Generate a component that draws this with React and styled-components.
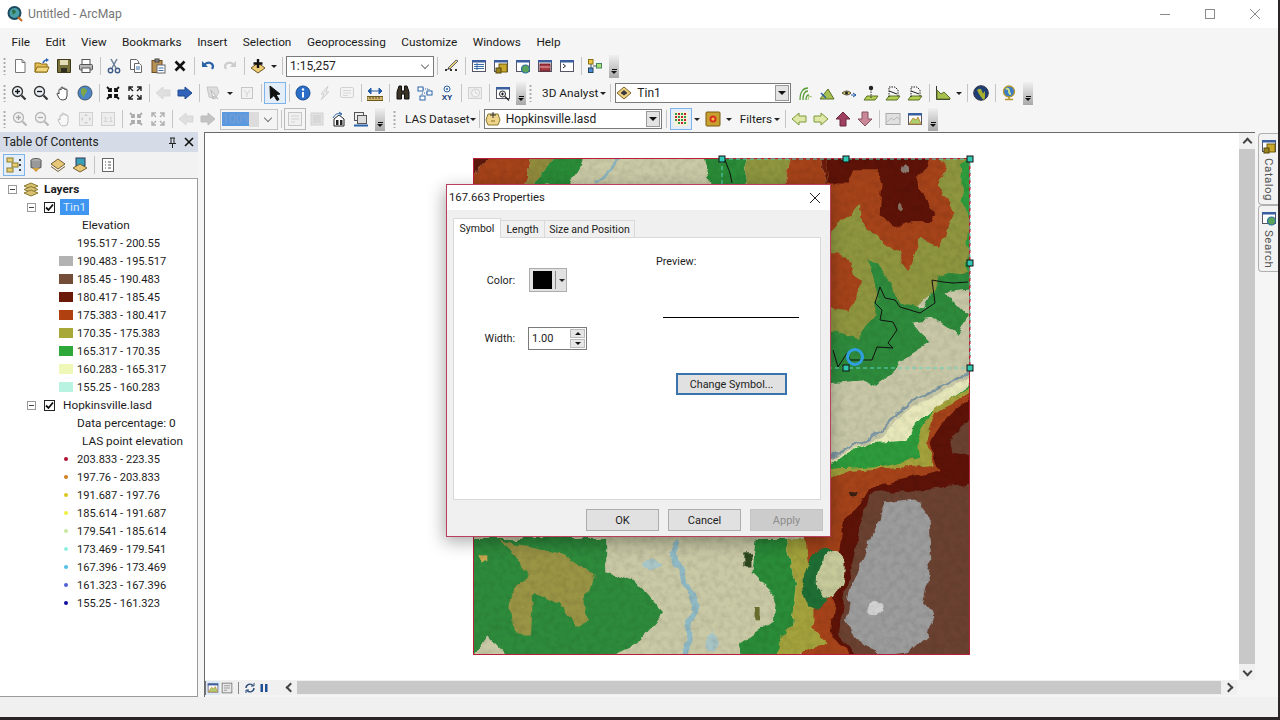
import React from 'react'
import styled, { createGlobalStyle } from 'styled-components'

const GlobalStyle = createGlobalStyle`
  html, body { margin: 0; padding: 0; background: #2b2528; }
  body { font-family: Roboto, "Liberation Sans", sans-serif; color: #222; overflow: hidden; }
`

// little window with a blue title strip, used by a lot of the toolbar icons
const win = (inner) => (
  <>
    <rect x="1.5" y="2.5" width="13" height="11" fill="#fff" stroke="#556" />
    <rect x="1" y="2" width="14" height="2.5" fill="#3b5f9e" />
    {inner}
  </>
)

const icons = {
  new: <><path d="M3.5 1.5h6.5l3 3v10h-9.500z" fill="#fff" stroke="#777" /><path d="M10 1.500v3h3" fill="none" stroke="#777" /></>,
  open: <><path d="M1 14V5h5l1 1h6v8z" fill="#e6bf57" stroke="#8a6a10" /><path d="M1 14l2-5h12l-2 5z" fill="#f2d680" stroke="#8a6a10" /><path d="M9 5q1-3 4-3" fill="none" stroke="#2a62b8" strokeWidth="1.500" /><path d="M12 0l3 2-3 2z" fill="#2a62b8" /></>,
  save: <><path d="M1.500 1.500h13v13h-13z" fill="#77703a" stroke="#3f3a18" /><rect x="4" y="2" width="8" height="5" fill="#e3dcb4" /><rect x="5" y="10" width="6" height="4.500" fill="#2f2d20" /></>,
  print: <><rect x="4" y="1.500" width="8" height="5" fill="#fff" stroke="#555" /><rect x="1.500" y="6.500" width="13" height="5.500" rx="1" fill="#b7b7b7" stroke="#555" /><rect x="4" y="10" width="8" height="4.500" fill="#fff" stroke="#555" /></>,
  cut: <><path d="M5 1l5 9M11 1L6 10" stroke="#6b7f96" strokeWidth="1.500" fill="none" /><circle cx="4.500" cy="12.500" r="2.200" fill="none" stroke="#3d5d86" strokeWidth="1.400" /><circle cx="11.500" cy="12.500" r="2.200" fill="none" stroke="#3d5d86" strokeWidth="1.400" /></>,
  copy: <><path d="M2.500 1.500h6l2 2v8h-8z" fill="#fff" stroke="#666" /><path d="M6.500 5.500h5l2 2v7h-7z" fill="#fff" stroke="#666" /><path d="M8 9h4M8 11h4" stroke="#3b6fa8" /></>,
  paste: <><rect x="2" y="2.500" width="10" height="12" fill="#b99154" stroke="#6b4d20" /><rect x="5" y="1" width="4" height="3" fill="#888" stroke="#444" /><rect x="7" y="7" width="8" height="8" fill="#fff" stroke="#666" /><path d="M8.500 10h5M8.500 12.500h5" stroke="#3b6fa8" /></>,
  del: <path d="M3.500 3.500l9 9M12.500 3.500l-9 9" stroke="#111" strokeWidth="2.600" />,
  undo: <><path d="M4 7q4-4 8-1 2 2 0 5" fill="none" stroke="#2a62a8" strokeWidth="2.200" /><path d="M2 3v6h6z" fill="#2a62a8" /></>,
  redo: <><path d="M12 7q-4-4-8-1-2 2 0 5" fill="none" stroke="#777" strokeWidth="2.200" /><path d="M14 3v6H8z" fill="#777" /></>,
  add: <><path d="M8 15L1 10l7-5 7 5z" fill="#eecb76" stroke="#6d5620" /><path d="M8 1v9M3.500 5.500h9" stroke="#111" strokeWidth="2.400" /></>,
  editor: <><path d="M2 12h12" stroke="#333" strokeDasharray="2 3" strokeWidth="2" /><path d="M5 10L13 2l2 1-8 8z" fill="#e8d070" stroke="#667" /><path d="M5 10l-1 2 3-1z" fill="#333" /></>,
  table: win(<><path d="M3 6.500h10M3 8.500h10M3 10.500h10" stroke="#3b6fa8" /><path d="M6 5v7" stroke="#3b6fa8" /></>),
  catalog: win(<><rect x="6" y="6" width="8" height="8" fill="#c9a82c" stroke="#6f5a10" /><rect x="3" y="10" width="5" height="5" fill="#9a8420" stroke="#544508" /></>),
  search: win(<circle cx="10.500" cy="11" r="4" fill="#5aa35a" stroke="#2c6f9e" strokeWidth="1.200" />),
  toolbox: win(<><rect x="3" y="6" width="10" height="7" fill="#a83a44" stroke="#6b1c24" /><path d="M3 9h10" stroke="#e8b0b0" /></>),
  python: win(<path d="M4 6l2.500 2L4 10" fill="none" stroke="#222" />),
  model: <><rect x="1.500" y="1.500" width="4.500" height="4.500" fill="#f0c840" stroke="#8a7010" /><rect x="1.500" y="10" width="4.500" height="4.500" fill="#4a8ad8" stroke="#245" /><rect x="9.500" y="5.500" width="5" height="4.500" fill="#a8e070" stroke="#486" /><path d="M4 6v4M6 8h3.500" stroke="#456" /></>,
  zoomin: <><circle cx="6.500" cy="6.500" r="5" fill="#e8eef4" stroke="#333" strokeWidth="1.300" /><path d="M4 6.500h5M6.500 4v5" stroke="#111" strokeWidth="1.300" /><path d="M10.500 10.500l4 4" stroke="#333" strokeWidth="2.200" /></>,
  zoomout: <><circle cx="6.500" cy="6.500" r="5" fill="#e8eef4" stroke="#333" strokeWidth="1.300" /><path d="M4 6.500h5" stroke="#111" strokeWidth="1.300" /><path d="M10.500 10.500l4 4" stroke="#333" strokeWidth="2.200" /></>,
  pan: <path d="M4 9V5q0-1 1-1t1 1V3q0-1 1-1t1 1v1q0-1 1-1t1 1v1q0-1 1-1t1 1v6q0 4-4 4-3 0-4-2L2 9q0-1 1-1z" fill="#fff" stroke="#444" />,
  globe: <><circle cx="8" cy="8" r="7" fill="#4a86c8" stroke="#44566a" /><path d="M4 4q3-2 5 0t0 4-2 4-3-4z" fill="#7ea548" /></>,
  fixin: <path d="M2 2l4 4M14 2l-4 4M2 14l4-4M14 14l-4-4M6 3v3H3M10 3v3h3M6 13v-3H3M10 13v-3h3" stroke="#111" strokeWidth="1.800" fill="none" />,
  fixout: <path d="M6 6L2.500 2.500M10 6l3.500-3.500M6 10l-3.500 3.500M10 10l3.500 3.500M2 6V2h4M14 6V2h-4M2 10v4h4M14 10v4h-4" stroke="#222" strokeWidth="1.400" fill="none" />,
  back: <path d="M1 8l7-6v3h7v6H8v3z" fill="#9cb6d8" stroke="#99a" />,
  fwd: <path d="M15 8L8 2v3H1v6h7v3z" fill="#2f62b8" stroke="#1e4a90" />,
  selfeat: <><path d="M2 2h10l2 5-4 7-6-2z" fill="#9ab" stroke="#666" /><path d="M6 5l2 9 1-3 4 3z" fill="#eee" stroke="#444" /></>,
  clear: <><rect x="2.500" y="2.500" width="11" height="11" fill="#eee" stroke="#666" /><path d="M5 5l3 4 3-4M8 9v3" stroke="#888" fill="none" /></>,
  pointer: <path d="M3 1l10 8-4 .5 3 5-2 1-3-5-3.500 3z" fill="#111" stroke="#111" strokeLinejoin="round" />,
  info: <><circle cx="8" cy="8" r="7" fill="#2a6ec8" stroke="#1a4a90" /><circle cx="8" cy="4.500" r="1.200" fill="#fff" /><path d="M7 7h2v5.500H7z" fill="#fff" /></>,
  bolt: <path d="M11 1L4 9h3l-3 6 8-8H9z" fill="#d0d0d0" stroke="#888" />,
  popup: <><rect x="1.500" y="2.500" width="13" height="10" rx="1.500" fill="#f0f0f0" stroke="#888" /><path d="M4 5.500h8M4 8h8M4 10.500h5" stroke="#999" /></>,
  measure: <><path d="M0 11.500h16v4H0z" fill="#d8b868" stroke="#6b5a20" /><path d="M3 12v2M6 12v2M9 12v2M12 12v2" stroke="#444" /><path d="M1 6h14M1 6l3-3v6zM15 6l-3-3v6z" stroke="#245ca8" fill="#245ca8" /></>,
  find: <><path d="M2 7l2-6h2.500v5h3V1H12l2 6v7H9.500V9h-3v5H2z" fill="#3a3326" stroke="#111" /></>,
  goxy: <><rect x="1" y="2" width="5" height="4" fill="#fff" stroke="#2a62a8" /><rect x="10" y="6" width="5" height="4" fill="#fff" stroke="#2a62a8" /><rect x="3" y="11" width="5" height="4" fill="#fff" stroke="#2a62a8" /><path d="M6 4h6v2M10 8H5v3" fill="none" stroke="#2a62a8" strokeDasharray="1 1" /></>,
  xy: <><circle cx="8" cy="4" r="3" fill="none" stroke="#2a62a8" /><circle cx="8" cy="4" r="1" fill="#2a62a8" /><text x="8" y="15" textAnchor="middle" fontSize="8" fontWeight="700" fontFamily="Liberation Sans" fill="#123c78">XY</text></>,
  time: <><rect x="1.500" y="2.500" width="13" height="11" fill="#ddd" stroke="#888" /><circle cx="8.500" cy="8" r="4" fill="#eee" stroke="#888" /><path d="M8.500 5.500V8l2 1" stroke="#888" fill="none" /></>,
  viewer: win(<><circle cx="7.500" cy="9" r="3" fill="#fff" stroke="#222" /><path d="M6 9h3M7.500 7.500v3M10 11.500l4 4" stroke="#222" strokeWidth="1.200" /></>),
  contour: <><path d="M3 15c0-8 3-12 8-12M6 15c0-6 2-9 5-9M9 15c0-3 1-5 3-5" fill="none" stroke="#5a9e3a" strokeWidth="1.300" /><path d="M11 15l1-4 3 1" fill="none" stroke="#a8c868" /></>,
  slope: <><path d="M1 14L9 4l6 10z" fill="#a8c050" stroke="#5a7028" /><path d="M2 8l5 5" stroke="#245ca8" strokeWidth="1.400" /></>,
  eye: <><path d="M1 8q5-4 9 0-4 4-9 0z" fill="#d8c060" stroke="#554" /><circle cx="5.500" cy="8" r="1.500" fill="#222" /><path d="M10 10h5M12 8l3 2-3 2" stroke="#245ca8" fill="none" /></>,
  point3d: <><path d="M1 15l3-4h11l-3 4z" fill="#b4d050" stroke="#5a7028" /><path d="M8 4v9" stroke="#333" strokeDasharray="1.500 1" /><circle cx="8" cy="3" r="2.200" fill="#222" /></>,
  wall3d: <><path d="M1 15l3-4h11l-3 4z" fill="#b4d050" stroke="#5a7028" /><path d="M4 12V2h6l3 3v7" fill="none" stroke="#222" strokeDasharray="1.500 1" /><path d="M4 6l8 3" stroke="#222" /></>,
  profile: <><path d="M1.500 1v13.500H15" fill="none" stroke="#333" /><path d="M2 14V5l4 4 3-2 6 6v1z" fill="#a8c050" stroke="#5a7028" /></>,
  earth: <><circle cx="8" cy="8" r="7.300" fill="#1d3f78" stroke="#334" /><path d="M4 5q4-3 5 1t2 1 1 4-4 1-2-3z" fill="#a8b030" /></>,
  desk: <><circle cx="8" cy="6.500" r="5.500" fill="#3a7cc8" stroke="#b8962a" strokeWidth="1.300" /><path d="M5 4q3-1 3 2t2 3" fill="none" stroke="#c8e088" strokeWidth="2" /><path d="M4 14.500h8M8 12v2" stroke="#b8962a" strokeWidth="1.500" /></>,
  fixfull: <><rect x="1.500" y="1.500" width="13" height="13" fill="#ddd" stroke="#888" /><path d="M8 3l2 2H6zM8 13l2-2H6zM3 8l2-2v4zM13 8l-2-2v4z" fill="#777" /></>,
  one: <><rect x="1.500" y="1.500" width="13" height="13" fill="#ddd" stroke="#888" /><text x="8" y="11" textAnchor="middle" fontSize="7" fontFamily="Liberation Sans" fill="#666">1:1</text></>,
  layout: <><rect x="1.500" y="1.500" width="13" height="13" fill="#e8e8e8" stroke="#666" /><path d="M4 5h8M4 8h8M4 11h4" stroke="#888" /></>,
  refresh: <><rect x="2" y="2" width="12" height="12" fill="#bbb" stroke="#888" /><path d="M4 4h8v8H4z" fill="#999" /></>,
  house: <><path d="M3 15V8l5-4 5 4v7z" fill="#fff" stroke="#222" /><path d="M2 7q3-6 8-4M8 1l3 2-3 2" fill="none" stroke="#2a62a8" /><rect x="5" y="9" width="2.500" height="5" fill="#222" /><rect x="9" y="9" width="2.500" height="5" fill="#222" /></>,
  stack: <><rect x="1.500" y="1.500" width="9" height="8" fill="#eee" stroke="#555" /><rect x="4.500" y="4.500" width="9" height="8" fill="#ddd" stroke="#555" /><path d="M1 14.500h14" stroke="#2a62a8" strokeWidth="2" /></>,
  lasp: <><path d="M3 3h10l2 6-2 5H3l-2-5z" fill="#eed48a" stroke="#8a7a30" /><path d="M8 1v6M5 4h6" stroke="#333" /><path d="M6 10h4" stroke="#8a6a20" /></>,
  grid: <><rect x="1" y="1" width="14" height="14" fill="#f8f0d8" /><path d="M2 2h2v2H2zM8 2h2v2H8zM5 5h2v2H5zM11 5h2v2h-2zM2 8h2v2H2zM8 8h2v2H8zM5 11h2v2H5zM11 11h2v2h-2z" fill="#2e9c3c" /><path d="M5 2h2v2H5zM11 2h2v2h-2zM2 5h2v2H2zM8 5h2v2H8zM5 8h2v2H5zM11 8h2v2h-2zM8 11h2v2H8z" fill="#c02030" /></>,
  tinsym: <><rect x="1" y="1" width="14" height="14" rx="1" fill="#c8a030" stroke="#7a5a10" /><circle cx="8" cy="8" r="3.500" fill="#d83020" /><circle cx="8" cy="8" r="1.500" fill="#f8c040" /></>,
  lback: <path d="M1 8l7-6v3h7v6H8v3z" fill="#e0e8a8" stroke="#7a9a3a" />,
  lfwd: <path d="M15 8L8 2v3H1v6h7v3z" fill="#e0e8a8" stroke="#7a9a3a" />,
  up: <path d="M8 1l7 7h-4v7H5V8H1z" fill="#a04060" stroke="#6b2840" />,
  down: <path d="M8 15l7-7h-4V1H5v7H1z" fill="#c88898" stroke="#8a5060" />,
  gprof: <><rect x="1" y="2.500" width="14" height="11" fill="#e0e0e0" stroke="#aaa" /><path d="M2 11l4-4 3 2 3-3 3 3" fill="none" stroke="#bbb" /></>,
  wprof: <>{win(<path d="M2 13l4-6 3 2 2-3 3 7z" fill="#a8d070" stroke="#c89040" />)}</>,
  catsmall: win(<><rect x="6" y="6" width="8" height="8" fill="#c9a82c" stroke="#6f5a10" /><rect x="3" y="10" width="5" height="5" fill="#9a8420" stroke="#544508" /></>),
  tree: <><rect x="1" y="1" width="6" height="4" fill="#e8d070" stroke="#8a7a30" /><rect x="6" y="6" width="6" height="4" fill="#e8d070" stroke="#8a7a30" /><rect x="1" y="11" width="6" height="4" fill="#e8d070" stroke="#8a7a30" /><path d="M13 3h2M13 8h2M13 13h2" stroke="#444" strokeWidth="2" /></>,
  cyl: <><ellipse cx="8" cy="3.500" rx="5" ry="2" fill="#bbb" stroke="#555" /><path d="M3 3.500v7q5 3 10 0v-7" fill="#999" stroke="#555" /><path d="M4 11h8l-4 4z" fill="#d0a040" /></>,
  tocdraw: <><path d="M8 2L1 7l7 5 7-5z" fill="#e8c878" stroke="#776030" /><path d="M1 9.500l7 5 7-5" fill="none" stroke="#776030" /></>,
  tocsel: <><rect x="4" y="1" width="9" height="8" fill="#38a0b8" stroke="#335" /><path d="M8 7L1 11l7 4 7-4z" fill="#e8c878" stroke="#776030" /></>,
  options: <><rect x="2.500" y="1.500" width="11" height="13" fill="#fff" stroke="#666" /><path d="M5 5h1M8 5h3M5 8h1M8 8h3M5 11h1M8 11h3" stroke="#555" /></>,
  layers: <><path d="M8 2l7 3-7 3-7-3z" fill="#d8c070" stroke="#8a7a30" /><path d="M8 5.500l7 3-7 3-7-3z" fill="#d8c070" stroke="#8a7a30" /><path d="M8 9l7 3-7 3-7-3z" fill="#d8c070" stroke="#8a7a30" /></>,
  tindiamond: <><path d="M8 2L1 8l7 6 7-6z" fill="#efcf80" stroke="#7a6028" /><path d="M8 5L4.500 8l3.500 2.500L11.500 8z" fill="#3a3a3a" /></>,
}

const Svg = styled.svg`
  display: block;
  flex: none;
  width: ${(p) => p.$size || 16}px;
  height: ${(p) => p.$size || 16}px;
  ${(p) => p.$off && 'opacity: .32; filter: grayscale(1);'}
`

const Icon = ({ name, off, size }) => (
  <Svg viewBox="0 0 16 16" $off={off} $size={size}>{icons[name]}</Svg>
)

const Page = styled.div`
  width: 1278px;
  height: 717px;
  background: #f5f5f5;
  display: flex;
  flex-direction: column;
  overflow: hidden;
`

const TitleBar = styled.div`
  height: 28px;
  flex: none;
  background: #fff;
  display: flex;
  align-items: center;
  padding-left: 7px;
  color: #767676;
  font-size: 12.200px;
`

const AppLogo = styled.svg`
  width: 16px;
  height: 16px;
  margin-right: 5px;
`

const WinButtons = styled.div`
  margin-left: auto;
  padding-right: 1px;
  display: flex;
`

const WinButton = styled.div`
  width: 45px;
  height: 28px;
  display: flex;
  align-items: center;
  justify-content: center;
`

const MenuBar = styled.div`
  height: 25px;
  padding-top: 2px;
  box-sizing: border-box;
  flex: none;
  display: flex;
  align-items: center;
  padding-left: 11.500px;
  gap: 15.500px;
  font-size: 11.800px;
  color: #1c1c1c;
`

const ToolRow = styled.div`
  height: 26px;
  flex: none;
  display: flex;
  align-items: center;
  padding-left: 3px;
  margin-bottom: ${(p) => p.$mb || 0}px;
`

const Grip = styled.div`
  width: 5px;
  height: 18px;
  flex: none;
  margin-left: ${(p) => p.$ml || 0}px;
  margin-right: ${(p) => p.$mr ?? 1}px;
  background-image: radial-gradient(circle, #a8a8a8 1px, transparent 1.200px);
  background-size: 3px 4px;
  background-repeat: repeat-y;
`

const Cell = styled.div`
  width: 22px;
  height: 22px;
  flex: none;
  display: flex;
  align-items: center;
  justify-content: center;
  box-sizing: border-box;
  ${(p) => p.$on && 'background: #e4eef8; border: 1px solid #7eb4ea;'}
  ${(p) => p.$boxed && 'border: 1px solid #b8b8b8;'}
`

const Sep = styled.div`
  width: 6px;
  height: 18px;
  flex: none;
  display: flex;
  justify-content: center;
  &::before {
    content: '';
    width: 1px;
    background: #c4c4c4;
  }
`

const Caret = styled.div`
  width: ${(p) => p.$w || 10}px;
  flex: none;
  display: flex;
  justify-content: center;
  &::before {
    content: '';
    border: 3px solid transparent;
    border-top: 3px solid #222;
    border-bottom: 0;
  }
`

const Overflow = styled.div`
  width: 10px;
  height: 23px;
  flex: none;
  margin-left: ${(p) => p.$ml || 2}px;
  background: linear-gradient(#f0f0f0, #a8a8a8);
  display: flex;
  flex-direction: column;
  align-items: center;
  justify-content: flex-end;
  padding-bottom: 4px;
  box-sizing: border-box;
  gap: 1px;
  &::before {
    content: '';
    width: 5px;
    height: 1px;
    background: #111;
  }
  &::after {
    content: '';
    border: 3px solid transparent;
    border-top: 3px solid #111;
    border-bottom: 0;
  }
`

const ToolText = styled.div`
  flex: none;
  display: flex;
  align-items: center;
  font-size: 11.800px;
  margin-left: ${(p) => p.$ml || 0}px;
  color: #1c1c1c;
`

const Combo = styled.div`
  width: ${(p) => p.$w}px;
  height: ${(p) => p.$h || 21}px;
  flex: none;
  box-sizing: border-box;
  margin-left: ${(p) => p.$ml || 0}px;
  margin-right: ${(p) => p.$mr || 0}px;
  border: 1px solid #7a7a7a;
  background: #fff;
  display: flex;
  align-items: center;
  padding-left: ${(p) => p.$pad ?? 3}px;
  font-size: 12px;
  gap: 5px;
`

const ComboArrow = styled.div`
  margin: ${(p) => p.$button ? '1px 1px 1px auto' : '0 0 0 auto'};
  width: ${(p) => p.$button ? 14 : 16}px;
  box-sizing: border-box;
  align-self: stretch;
  flex: none;
  display: flex;
  align-items: center;
  justify-content: center;
  ${(p) => p.$button && 'background: #e3e3e3; border: 1px solid #999;'}
  &::before {
    content: '';
    ${(p) => p.$button
      ? 'border: 4px solid transparent; border-top: 4px solid #111; border-bottom: 0;'
      : 'width: 5px; height: 5px; border-right: 1px solid #777; border-bottom: 1px solid #777; transform: translateY(-1px) rotate(45deg);'}
  }
`

const PercentBox = styled.div`
  width: 58px;
  height: 21px;
  flex: none;
  margin-left: 1px;
  box-sizing: border-box;
  border: 1px solid #c4c4c4;
  background: #f4f4f4;
  display: flex;
  align-items: center;
  padding: 0 1px;
  font-size: 12px;
`

const PercentValue = styled.span`
  background: #5a98e0;
  color: #7aa0d0;
  width: 27px;
`

const PercentRest = styled.span`
  background: #dcdcdc;
  width: 10px;
  align-self: stretch;
  margin: 2px 0;
`

const Main = styled.div`
  flex: 1;
  display: flex;
  min-height: 0;
`

const Toc = styled.div`
  width: 198px;
  flex: none;
  margin-right: 6px;
  display: flex;
  flex-direction: column;
`

const TocHeader = styled.div`
  height: 20px;
  flex: none;
  background: #d5dce8;
  display: flex;
  align-items: center;
  padding: 0 3px;
  font-size: 12px;
  color: #222;
`

const TocHeaderTools = styled.div`
  margin-left: auto;
  display: flex;
  align-items: center;
  gap: 7px;
  padding-right: 1px;
`

const TocTools = styled.div`
  height: 26px;
  flex: none;
  display: flex;
  align-items: center;
  padding-left: 3px;
  background: #f2f2f2;
`

const TreeBox = styled.div`
  flex: 1;
  background: #fff;
  border-top: 1px solid #a6a6a6;
  border-right: 1px solid #9a9a9a;
  border-bottom: 1px solid #9a9a9a;
  padding-top: 1px;
  box-sizing: border-box;
`

const TreeRow = styled.div`
  height: 18px;
  display: flex;
  align-items: center;
  padding-left: ${(p) => p.$indent}px;
  font-size: ${(p) => p.$num ? 11.100 : 11.800}px;
  white-space: nowrap;
  color: #1c1c1c;
`

const Expander = styled.div`
  width: 9px;
  height: 9px;
  flex: none;
  border: 1px solid #999;
  box-sizing: border-box;
  display: flex;
  align-items: center;
  justify-content: center;
  &::before {
    content: '';
    width: 5px;
    height: 1px;
    background: #444;
  }
`

const CheckBox = styled.div`
  width: 11px;
  height: 11px;
  flex: none;
  margin-left: 8px;
  box-sizing: border-box;
  border: 1px solid #222;
  display: flex;
  align-items: center;
  justify-content: center;
`

const LayerIcon = styled.div`
  margin: 0 6px;
`

const LayerName = styled.span`
  margin-left: ${(p) => p.$ml ?? 5}px;
  padding: 1px 3px;
  font-weight: ${(p) => p.$bold ? 700 : 400};
  ${(p) => p.$selected && 'background: #3f96f0; color: #dcebfb;'}
`

const Swatch = styled.div`
  width: 14px;
  height: 10px;
  flex: none;
  margin-right: 4px;
  background: ${(p) => p.$color};
`

const DotCell = styled.div`
  width: 14px;
  flex: none;
  margin-right: 4px;
  display: flex;
  justify-content: center;
`

const Dot = styled.div`
  width: 4px;
  height: 4px;
  border-radius: 50%;
  background: ${(p) => p.$color};
`

const Center = styled.div`
  flex: 1;
  min-width: 0;
  display: flex;
  flex-direction: column;
  border-left: 1px solid #6a6a6a;
  border-top: 1px solid #6a6a6a;
`

const CenterTop = styled.div`
  flex: 1;
  display: flex;
  min-height: 0;
`

const Canvas = styled.div`
  flex: 1;
  position: relative;
  background: #fff;
`

const VScroll = styled.div`
  width: 16px;
  flex: none;
  background: #f0f0f0;
  display: flex;
  flex-direction: column;
`

const ScrollArrow = styled.div`
  width: 16px;
  height: 16px;
  flex: none;
  display: flex;
  align-items: center;
  justify-content: center;
  &::before {
    content: '';
    width: 5px;
    height: 5px;
    border-left: 2px solid #444;
    border-top: 2px solid #444;
    transform: ${(p) => p.$rot};
  }
`

const ScrollThumb = styled.div`
  flex: 1;
  background: #c8c8c8;
`

const HBarThumb = styled(ScrollThumb)`
  height: 13px;
`

const HBar = styled.div`
  height: 15px;
  flex: none;
  display: flex;
  align-items: center;
  background: #f0f0f0;
  margin-right: 18px;
  margin-bottom: 2px;
`

const ViewTools = styled.div`
  width: 76px;
  flex: none;
  display: flex;
  align-items: center;
  box-sizing: border-box;
  border-left: 1px solid #777;
`

const ViewCell = styled.div`
  width: 14px;
  height: 14px;
  flex: none;
  display: flex;
  align-items: center;
  justify-content: center;
  ${(p) => p.$on && 'background: #dce8f4;'}
`

const ViewSep = styled.div`
  width: 1px;
  height: 12px;
  margin: 0 4px;
  background: #888;
`

const Dock = styled.div`
  width: 20px;
  margin: 1px 0 0 3px;
  flex: none;
  display: flex;
  flex-direction: column;
`

const DockTab = styled.div`
  height: ${(p) => p.$h}px;
  box-sizing: border-box;
  border: 1px solid #b0b0b0;
  border-right: 0;
  border-radius: 4px 0 0 4px;
  display: flex;
  flex-direction: column;
  align-items: center;
  padding-top: 4px;
  gap: 4px;
  background: #f2f2f2;
`

const DockLabel = styled.span`
  writing-mode: vertical-rl;
  font-size: 11.500px;
  letter-spacing: .5px;
  color: #555;
`

const StatusBar = styled.div`
  height: 20px;
  flex: none;
  background: #f0f0f0;
`

const MapSvg = styled.svg`
  position: absolute;
  left: 268px;
  top: 25px;
  width: 497px;
  height: 497px;
  overflow: visible;
`

const Dialog = styled.div`
  position: absolute;
  left: 241px;
  top: 51px;
  width: 385px;
  height: 353px;
  box-sizing: border-box;
  border: 1px solid #b8405c;
  background: #f0f0f0;
  display: flex;
  flex-direction: column;
  box-shadow: -2px 5px 16px rgba(0, 0, 0, .32);
`

const DialogTitle = styled.div`
  height: 25px;
  flex: none;
  background: #fff;
  display: flex;
  align-items: center;
  padding-left: 2px;
  font-size: 11.300px;
`

const DialogClose = styled.div`
  margin-left: auto;
  width: 30px;
  display: flex;
  justify-content: center;
`

const Tabs = styled.div`
  display: flex;
  align-items: flex-end;
  padding: 8px 0 0 6px;
  height: 28px;
  box-sizing: border-box;
  flex: none;
  position: relative;
  z-index: 1;
  margin-bottom: -1px;
`

const Tab = styled.div`
  height: ${(p) => p.$active ? 20 : 18}px;
  width: ${(p) => p.$w}px;
  box-sizing: border-box;
  flex: none;
  display: flex;
  align-items: center;
  justify-content: center;
  font-size: 10.500px;
  background: ${(p) => p.$active ? '#fff' : '#f0f0f0'};
  border: 1px solid #d9d9d9;
  border-left-width: ${(p) => p.$active ? 1 : 0}px;
  border-bottom: ${(p) => p.$active ? '0' : '1px solid #d9d9d9'};
`

const Panel = styled.div`
  margin: 0 9px 0 6px;
  height: 263px;
  flex: none;
  box-sizing: border-box;
  background: #fff;
  border: 1px solid #d9d9d9;
  display: flex;
  font-size: 10.800px;
`

const LeftCol = styled.div`
  width: 202px;
  flex: none;
  padding-top: 30px;
`

const FieldRow = styled.div`
  display: flex;
  align-items: center;
  height: ${(p) => p.$h}px;
  margin-bottom: 35px;
`

const FieldLabel = styled.div`
  width: 61px;
  flex: none;
  text-align: right;
  margin-right: ${(p) => p.$gap}px;
`

const ColorButton = styled.div`
  width: 38px;
  height: 24px;
  box-sizing: border-box;
  border: 1px solid #adadad;
  background: #e1e1e1;
  display: flex;
  align-items: center;
  padding-left: 3px;
`

const ColorChip = styled.div`
  width: 19px;
  height: 18px;
  background: #000;
`

const ColorSplit = styled.div`
  width: 1px;
  height: 18px;
  margin: 0 3px;
  background: #8a8a8a;
`

const SpinBox = styled.div`
  width: 59px;
  height: 23px;
  box-sizing: border-box;
  border: 1px solid #7a7a7a;
  background: #fff;
  display: flex;
  align-items: center;
  padding-left: 3px;
  font-size: 11px;
`

const Spinners = styled.div`
  margin-left: auto;
  margin-right: 1px;
  width: 15px;
  display: flex;
  flex-direction: column;
  gap: 1px;
`

const SpinButton = styled.div`
  height: 9px;
  background: #e6e6e6;
  border: 1px solid #bbb;
  box-sizing: border-box;
  display: flex;
  align-items: center;
  justify-content: center;
  &::before {
    content: '';
    border: 3px solid transparent;
    ${(p) => p.$down ? 'border-top: 3px solid #111; border-bottom: 0;' : 'border-bottom: 3px solid #111; border-top: 0;'}
  }
`

const RightCol = styled.div`
  flex: 1;
  display: flex;
  flex-direction: column;
  align-items: flex-start;
  padding-top: 17px;
`

const PreviewLine = styled.div`
  width: 136px;
  height: 1px;
  background: #000;
  margin: 49px 0 0 7px;
`

const ChangeButton = styled.div`
  width: 111px;
  height: 22px;
  margin: 55px 0 0 20px;
  box-sizing: border-box;
  border: 2px solid #3a74ae;
  background: #e1e1e1;
  display: flex;
  align-items: center;
  justify-content: center;
  font-size: 10.800px;
`

const DialogFooter = styled.div`
  flex: 1;
  display: flex;
  justify-content: flex-end;
  align-items: flex-start;
  padding: 9px 7px 0 0;
  gap: 9px;
`

const DialogButton = styled.div`
  width: 73px;
  height: 22px;
  box-sizing: border-box;
  border: 1px solid ${(p) => p.$off ? '#c4c4c4' : '#adadad'};
  background: ${(p) => p.$off ? '#cccccc' : '#e1e1e1'};
  color: ${(p) => p.$off ? '#8c8c8c' : '#1c1c1c'};
  display: flex;
  align-items: center;
  justify-content: center;
  font-size: 11px;
`

const menus = ['File', 'Edit', 'View', 'Bookmarks', 'Insert', 'Selection', 'Geoprocessing', 'Customize', 'Windows', 'Help']

const tinClasses = [
  ['195.517 - 200.55', '#ffffff'],
  ['190.483 - 195.517', '#b2b2b2'],
  ['185.45 - 190.483', '#734d37'],
  ['180.417 - 185.45', '#6b1a0a'],
  ['175.383 - 180.417', '#b04010'],
  ['170.35 - 175.383', '#a8a838'],
  ['165.317 - 170.35', '#2ea838'],
  ['160.283 - 165.317', '#f0f8b8'],
  ['155.25 - 160.283', '#b8f2e0'],
]

const lasClasses = [
  ['203.833 - 223.35', '#b01030'],
  ['197.76 - 203.833', '#d08020'],
  ['191.687 - 197.76', '#d8c820'],
  ['185.614 - 191.687', '#f0f040'],
  ['179.541 - 185.614', '#c8e8a0'],
  ['173.469 - 179.541', '#90f0e0'],
  ['167.396 - 173.469', '#50c0e8'],
  ['161.323 - 167.396', '#5060d8'],
  ['155.25 - 161.323', '#1010a0'],
]

// "name" is an icon, "name-" a greyed one, "name*" highlighted, "name#" boxed, | a separator, v a dropdown arrow
const Tools = ({ list }) => list.split(' ').map((t, i) => {
  if (t === '|') return <Sep key={i} />
  if (t === 'v') return <Caret key={i} />
  const off = t.endsWith('-')
  const on = t.endsWith('*')
  const boxed = t.endsWith('#')
  const name = off || on || boxed ? t.slice(0, -1) : t
  return <Cell key={i} $on={on} $boxed={boxed}><Icon name={name} off={off || boxed} /></Cell>
})

const Tick = () => (
  <svg width="9" height="9" viewBox="0 0 9 9"><path d="M1 4.500l2.500 2.500L8 1.500" fill="none" stroke="#111" strokeWidth="1.800" /></svg>
)

const handles = [[722, 159], [846, 159], [970, 159], [970, 263], [970, 368], [846, 368]]

// screen coordinates, the viewBox starts at the map's corner
const mapShapes = [
  ['473,158 495,158 480,175 473,180', '#5e1a0c'],
  ['495,158 535,158 528,190 473,190 473,180 480,175', '#a5431a'],
  ['535,158 557,158 535,190 528,190', '#908a3c'],
  ['557,158 590,158 580,175 570,190 535,190', '#2a8c38'],
  ['703,158 745,158 745,190 712,190', '#2a8c38'],
  ['745,158 788,158 785,190 745,190', '#8f963f'],
  ['788,158 818,158 825,190 785,190', '#a5431a'],
  ['818,158 850,158 850,190 825,190', '#6b1c0c'],
  ['825,158 970,158 970,395 825,395', '#8f963f'],
  ['970,288 935,290 900,320 860,375 825,380 825,480 970,480', '#c8c8a8'],
  ['863,260 877,267 897,303 920,310 930,293 933,280 970,273 968,290 940,293 963,317 953,335 930,320 907,323 927,343 897,363 873,387 860,380 825,383 825,330 857,340 873,317 873,283', '#2e8b3c'],
  ['957,167 968,160 970,160 970,285 962,265 966,225 958,195', '#2e9c3c'],
  ['825,158 930,160 943,170 933,187 950,213 937,250 917,240 913,253 903,273 897,253 877,243 858,220 858,207 830,237 825,240', '#a5431a'],
  ['825,158 927,158 923,173 913,180 917,193 933,220 927,225 910,225 890,230 877,217 880,187 873,173 853,173 847,187 825,187', '#5e1308'],
  ['825,253 847,260 850,277 860,283 847,313 825,310', '#a5431a'],
  ['825,460 878,437 908,407 970,377 970,480 825,480', '#e8e8bc'],
  ['825,463 865,443 905,440 908,427 970,380 970,654 825,654', '#2e9c3c'],
  ['825,468 878,465 918,457 915,437 932,407 970,383 970,654 825,654', '#a3a23c'],
  ['805,490 848,470 932,463 922,443 932,413 970,390 970,654 800,654', '#a5431a'],
  ['970,397 938,423 925,443 938,470 868,487 862,497 842,520 835,560 832,600 828,630 855,654 970,654', '#5e1308'],
  ['968,418 945,437 948,450 968,455', '#6b4231'],
  ['970,483 868,493 858,523 850,560 845,583 835,630 858,654 970,654', '#6b4231'],
  ['881,501 912,497 925,514 928,559 919,600 933,608 923,632 905,649 885,652 861,642 843,618 850,583 874,525', '#9c9c9c'],
  ['473,537 608,537 608,570 638,580 665,610 638,640 615,654 512,654 492,632 475,654 473,654', '#2e8b3c'],
  ['502,538 562,550 598,573 585,597 592,618 578,621 561,601 537,590 535,632 519,632 512,597 530,570 516,549', '#9a9445'],
  ['755,537 785,537 795,583 790,620 775,654 742,654 738,640 772,617 775,593 752,570', '#2a8c38'],
  ['785,537 805,537 812,600 812,625 825,640 790,654 770,654 790,620 795,583', '#a3a23c'],
]

const TerrainMap = () => (
  <MapSvg viewBox="473 158 497 497">
    <defs>
      <clipPath id="mapClip"><rect x="473" y="158" width="497" height="497" /></clipPath>
      <filter id="rough" x="-3%" y="-3%" width="106%" height="106%" colorInterpolationFilters="sRGB">
        <feTurbulence type="fractalNoise" baseFrequency="0.07" numOctaves="3" seed="4" result="n" />
        <feDisplacementMap in="SourceGraphic" in2="n" scale="9" xChannelSelector="R" yChannelSelector="G" />
      </filter>
      <filter id="relief" x="0" y="0" width="100%" height="100%">
        <feTurbulence type="fractalNoise" baseFrequency="0.16" numOctaves="2" seed="7" />
        <feColorMatrix values="0 0 0 0 0  0 0 0 0 0  0 0 0 0 0  1.400 0 0 0 -.52" />
      </filter>
    </defs>
    <rect x="473" y="158" width="497" height="497" fill="#c9c9a6" />
    <g clipPath="url(#mapClip)">
      <g filter="url(#rough)" transform="translate(721.500 406.500) scale(1.016) translate(-721.500 -406.500)">
        {mapShapes.map(([points, fill]) => <polygon key={points} points={points} fill={fill} />)}

        {/* rivers, ponds, the island and a few dark spots */}
        <path d="M622 158L610 178 597 186" fill="none" stroke="#8cb5c0" strokeWidth="3" />
        <path d="M825 458L875 433 908 400 970 372" fill="none" stroke="#7d97a3" strokeWidth="2.500" />
        <path d="M678 540L673 552 686 578 696 598 690 622 686 654" fill="none" stroke="#8fb9c4" strokeWidth="6" />
        <ellipse cx="652" cy="562" rx="10" ry="5" fill="#a9c6c6" />
        <ellipse cx="712" cy="637" rx="6" ry="9" fill="#a9c6c6" />
        <ellipse cx="820" cy="575" rx="17" ry="30" transform="rotate(14 820 575)" fill="#1f6f35" />
        <ellipse cx="829" cy="572" rx="13" ry="25" transform="rotate(12 829 572)" fill="#c6c99a" />
        <ellipse cx="873" cy="605" rx="9" ry="7" fill="#d2d2d2" />
        <ellipse cx="902" cy="174" rx="3" ry="6" fill="#8a7a70" />
        <ellipse cx="897" cy="210" rx="3" ry="5" fill="#86705e" />
        <ellipse cx="852" cy="492" rx="4" ry="3" fill="#3a2010" />
        <rect x="484" y="552" width="8" height="8" fill="#c8a850" />
        <rect x="754" y="605" width="6" height="12" fill="#6b7030" />
        <rect x="744" y="552" width="7" height="12" fill="#2d4a20" />
      </g>
    </g>

    <rect x="473" y="158" width="497" height="497" filter="url(#relief)" opacity=".12" />

    {/* the selected line graphic */}
    <path d="M725 160L730 173 732 183M968 282L953 283 943 282 932 280 935 303 920 313 900 307 895 300 885 298 880 287 875 303 882 310 880 320 893 322 897 330 888 343 893 348 877 347 872 360 850 360 847 353 838 367 833 350" fill="none" stroke="#111" strokeWidth="1" />
    <rect x="473.500" y="158.500" width="496" height="496" fill="none" stroke="#b81f38" />
    <path d="M722 159H970V368H722z" fill="none" stroke="#58d8c0" strokeDasharray="4 3" />
    <path d="M970 159V368" fill="none" stroke="#c02030" strokeDasharray="3 4" />
    {handles.map(([x, y]) => (
      <rect key={x + '-' + y} x={x - 3} y={y - 3} width="6" height="6" fill="#30c8b0" stroke="#111" />
    ))}
    <circle cx="855" cy="357" r="7.500" fill="none" stroke="#2f9fe0" strokeWidth="3" />
  </MapSvg>
)

const App = () => (
  <Page>
    <GlobalStyle />
    <TitleBar>
      <AppLogo viewBox="0 0 16 16">
        <circle cx="7.500" cy="7" r="6" fill="#4aa0a8" stroke="#1c4a60" strokeWidth="2" />
        <path d="M5 4q3-1 4 2l-3 3z" fill="#2e6e3c" />
        <path d="M11 11l4 4" stroke="#c86a20" strokeWidth="2.200" />
      </AppLogo>
      Untitled - ArcMap
      <WinButtons>
        <WinButton><svg width="10" height="10"><path d="M0 5.500h10" stroke="#8a8a8a" /></svg></WinButton>
        <WinButton><svg width="10" height="10"><rect x=".5" y=".5" width="9" height="9" fill="none" stroke="#8a8a8a" /></svg></WinButton>
        <WinButton><svg width="10" height="10"><path d="M0 0l10 10M10 0L0 10" stroke="#8a8a8a" /></svg></WinButton>
      </WinButtons>
    </TitleBar>

    <MenuBar>{menus.map((m) => <span key={m}>{m}</span>)}</MenuBar>

    <ToolRow $mb={1}>
      <Grip />
      <Tools list="new open save print | cut copy paste del | undo redo- | add v |" />
      <Combo $w={148} $ml={1}>1:15,257<ComboArrow /></Combo>
      <Tools list="| editor | table catalog search toolbox python | model" />
      <Overflow $ml={3} />
    </ToolRow>

    <ToolRow>
      <Grip $mr={0} />
      <Tools list="zoomin zoomout pan globe | fixin fixout | back- fwd | selfeat-" />
      <Caret $w={12} />
      <Tools list="clear- | pointer* | info bolt- popup- | measure | find goxy xy | time- | viewer" />
      <Overflow />
      <Grip $ml={3} />
      <ToolText $ml={7}>3D Analyst</ToolText>
      <Caret $w={9} />
      <Sep />
      <Combo $w={176} $h={20} $ml={2} $mr={3} $pad={0}><Icon name="tindiamond" />Tin1<ComboArrow $button /></Combo>
      <Tools list="contour slope eye point3d wall3d wall3d | profile v | earth | desk" />
      <Overflow $ml={3} />
    </ToolRow>

    <ToolRow>
      <Grip />
      <Tools list="zoomin- zoomout- pan- fixfull- one- | fixin- fixout- | back- fwd-" />
      <PercentBox><PercentValue>100%</PercentValue><PercentRest /><ComboArrow /></PercentBox>
      <Tools list="| layout# refresh- house stack" />
      <Overflow $ml={3} />
      <Grip $ml={8} />
      <ToolText $ml={6}>LAS Dataset</ToolText>
      <Caret $w={7} />
      <Sep />
      <Combo $w={178} $h={20} $ml={1} $mr={2} $pad={0}><Icon name="lasp" />Hopkinsville.lasd<ComboArrow $button /></Combo>
      <Tools list="| grid* v tinsym v" />
      <ToolText $ml={6}>Filters</ToolText>
      <Caret $w={10} />
      <Tools list="| lback lfwd up down | gprof wprof" />
      <Overflow $ml={2} />
    </ToolRow>

    <Main>
      <Toc>
        <TocHeader>
          Table Of Contents
          <TocHeaderTools>
            <svg width="9" height="11"><path d="M2 1h5M3 1v5M6 1v5M1 6.500h7M4.500 6.500V11" stroke="#222" fill="none" /></svg>
            <svg width="10" height="10"><path d="M1 1l8 8M9 1l-8 8" stroke="#111" strokeWidth="1.600" /></svg>
          </TocHeaderTools>
        </TocHeader>
        <TocTools>
          <Tools list="tree* cyl tocdraw tocsel | options" />
        </TocTools>
        <TreeBox>
          <TreeRow $indent={8}>
            <Expander />
            <LayerIcon><Icon name="layers" /></LayerIcon>
            <LayerName $bold $ml={-4}>Layers</LayerName>
          </TreeRow>
          <TreeRow $indent={27}>
            <Expander />
            <CheckBox><Tick /></CheckBox>
            <LayerName $selected>Tin1</LayerName>
          </TreeRow>
          <TreeRow $indent={82}>Elevation</TreeRow>
          {tinClasses.map(([label, color]) => (
            <TreeRow key={label} $indent={59} $num>
              <Swatch $color={color} />{label}
            </TreeRow>
          ))}
          <TreeRow $indent={27}>
            <Expander />
            <CheckBox><Tick /></CheckBox>
            <LayerName>Hopkinsville.lasd</LayerName>
          </TreeRow>
          <TreeRow $indent={77}>Data percentage: 0</TreeRow>
          <TreeRow $indent={82}>LAS point elevation</TreeRow>
          {lasClasses.map(([label, color]) => (
            <TreeRow key={label} $indent={59} $num>
              <DotCell><Dot $color={color} /></DotCell>{label}
            </TreeRow>
          ))}
        </TreeBox>
      </Toc>

      <Center>
        <CenterTop>
          <Canvas>
            <TerrainMap />
            <Dialog>
              <DialogTitle>
                167.663 Properties
                <DialogClose>
                  <svg width="12" height="12"><path d="M1 1l10 10M11 1L1 11" stroke="#222" /></svg>
                </DialogClose>
              </DialogTitle>
              <Tabs>
                <Tab $active $w={48}>Symbol</Tab>
                <Tab $w={44}>Length</Tab>
                <Tab $w={90}>Size and Position</Tab>
              </Tabs>
              <Panel>
                <LeftCol>
                  <FieldRow $h={24}>
                    <FieldLabel $gap={14}>Color:</FieldLabel>
                    <ColorButton><ColorChip /><ColorSplit /><Caret $w={6} /></ColorButton>
                  </FieldRow>
                  <FieldRow $h={23}>
                    <FieldLabel $gap={13}>Width:</FieldLabel>
                    <SpinBox>
                      1.00
                      <Spinners><SpinButton /><SpinButton $down /></Spinners>
                    </SpinBox>
                  </FieldRow>
                </LeftCol>
                <RightCol>
                  Preview:
                  <PreviewLine />
                  <ChangeButton>Change Symbol...</ChangeButton>
                </RightCol>
              </Panel>
              <DialogFooter>
                <DialogButton>OK</DialogButton>
                <DialogButton>Cancel</DialogButton>
                <DialogButton $off>Apply</DialogButton>
              </DialogFooter>
            </Dialog>
          </Canvas>
          <VScroll>
            <ScrollArrow $rot="translateY(1px) rotate(45deg)" />
            <ScrollThumb />
            <ScrollArrow $rot="translateY(-1px) rotate(225deg)" />
          </VScroll>
        </CenterTop>
        <HBar>
          <ViewTools>
            <ViewCell $on><Icon name="wprof" size={12} /></ViewCell>
            <ViewCell><Icon name="layout" size={12} /></ViewCell>
            <ViewSep />
            <ViewCell><svg width="12" height="12" viewBox="0 0 12 12"><path d="M2 6a4 4 0 0 1 7-2.500M10 6a4 4 0 0 1-7 2.500" fill="none" stroke="#2a4a78" strokeWidth="1.400" /><path d="M7 4h3V1M5 8H2v3" fill="none" stroke="#2a4a78" /></svg></ViewCell>
            <ViewCell><svg width="12" height="12"><path d="M2.500 2v8h2.500V2zM7 2v8h2.500V2z" fill="#1f4f90" /></svg></ViewCell>
          </ViewTools>
          <ScrollArrow $rot="translateX(1px) rotate(-45deg)" />
          <HBarThumb />
          <ScrollArrow $rot="translateX(-1px) rotate(135deg)" />
        </HBar>
      </Center>

      <Dock>
        <DockTab $h={72}>
          <Icon name="catsmall" size={16} />
          <DockLabel>Catalog</DockLabel>
        </DockTab>
        <DockTab $h={67}>
          <Icon name="search" size={16} />
          <DockLabel>Search</DockLabel>
        </DockTab>
      </Dock>
    </Main>

    <StatusBar />
  </Page>
)

export default App
